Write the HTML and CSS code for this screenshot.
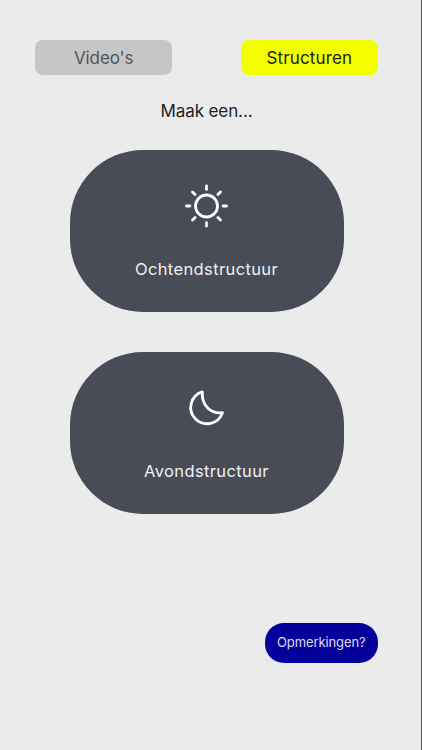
FILE: index.html
```html
<!DOCTYPE html>
<html lang="nl">
	<head>
		<title>Structuren</title>
		<meta charset="utf-8">
		<meta name="viewport" content="width=device-width, initial-scale=1.0">
		<link rel="stylesheet" href="styles.css">
	</head>

	<body>
		<div class="screen">
			<nav class="tabs">
				<button class="tab videos">Video's</button>
				<button class="tab active">Structuren</button>
			</nav>

			<h1 class="title">Maak een...</h1>

			<main class="choices">
				<button class="choice">
					<svg class="icon" viewBox="0.5 0 44 44">
						<circle cx="22" cy="22" r="11"/>
						<path d="M22 2v3.4M22 38.6V42M2 22h3.4M38.6 22H42M8 8l2.6 2.6M33.4 33.4L36 36M8 36l2.6-2.6M33.4 10.6L36 8"/>
					</svg>
					<span class="label">Ochtendstructuur</span>
				</button>
				<button class="choice">
					<svg class="icon" viewBox="0.5 0 44 44">
						<path d="M17.8 5.8A16.3 16.3 0 1 0 38 26.6C26.5 28.2 16.8 19.5 17.8 5.8Z"/>
					</svg>
					<span class="label">Avondstructuur</span>
				</button>
			</main>

			<button class="feedback">Opmerkingen?</button>
		</div>
	</body>
</html>
```

FILE: styles.css
```css
* {
	box-sizing: border-box;
}

body {
	margin: 0;
	background: #ebebeb;
	font-family: Inter, "Liberation Sans", sans-serif;
}

button {
	padding: 0;
	border: 0;
	font-family: inherit;
}

.screen {
	display: flex;
	flex-direction: column;
	height: 750px;
	padding: 40px 43px 0 35px;
	border-right: 1px solid #555;
}

.tabs {
	display: flex;
	justify-content: space-between;
}

.tab {
	width: 137.4px;
	height: 35.4px;
	border-radius: 8px;
	background: #c6c6c6;
	color: #50535c;
	font-size: 17px;
	letter-spacing: 0.15px;
}

.videos {
	letter-spacing: -0.1px;
}

.active {
	background: #f3ff00;
	color: #1c1f10;
}

.title {
	margin: 24.6px 0 0;
	color: #222;
	font-size: 17px;
	font-weight: 400;
	line-height: 22px;
	letter-spacing: -0.1px;
	text-align: center;
}

.choices {
	display: flex;
	flex-direction: column;
	align-items: center;
	gap: 40px;
	margin-top: 28px;
}

.choice {
	display: flex;
	flex-direction: column;
	align-items: center;
	width: 274px;
	height: 162px;
	padding-top: 34px;
	border-radius: 73px;
	background: #484c56;
	color: #f0f0f5;
}

.icon {
	width: 44px;
	height: 44px;
	fill: none;
	stroke: #fff;
	stroke-width: 2.8;
	stroke-linecap: round;
	stroke-linejoin: round;
}

.label {
	margin-top: 30px;
	font-size: 16.5px;
	line-height: 22px;
	letter-spacing: 0.38px;
}

.feedback {
	align-self: flex-end;
	width: 113.5px;
	height: 40px;
	margin-top: 109px;
	padding-bottom: 2px;
	border-radius: 19px;
	background: #05009b;
	color: #dedcf5;
	font-size: 13px;
	letter-spacing: -0.1px;
}
```
